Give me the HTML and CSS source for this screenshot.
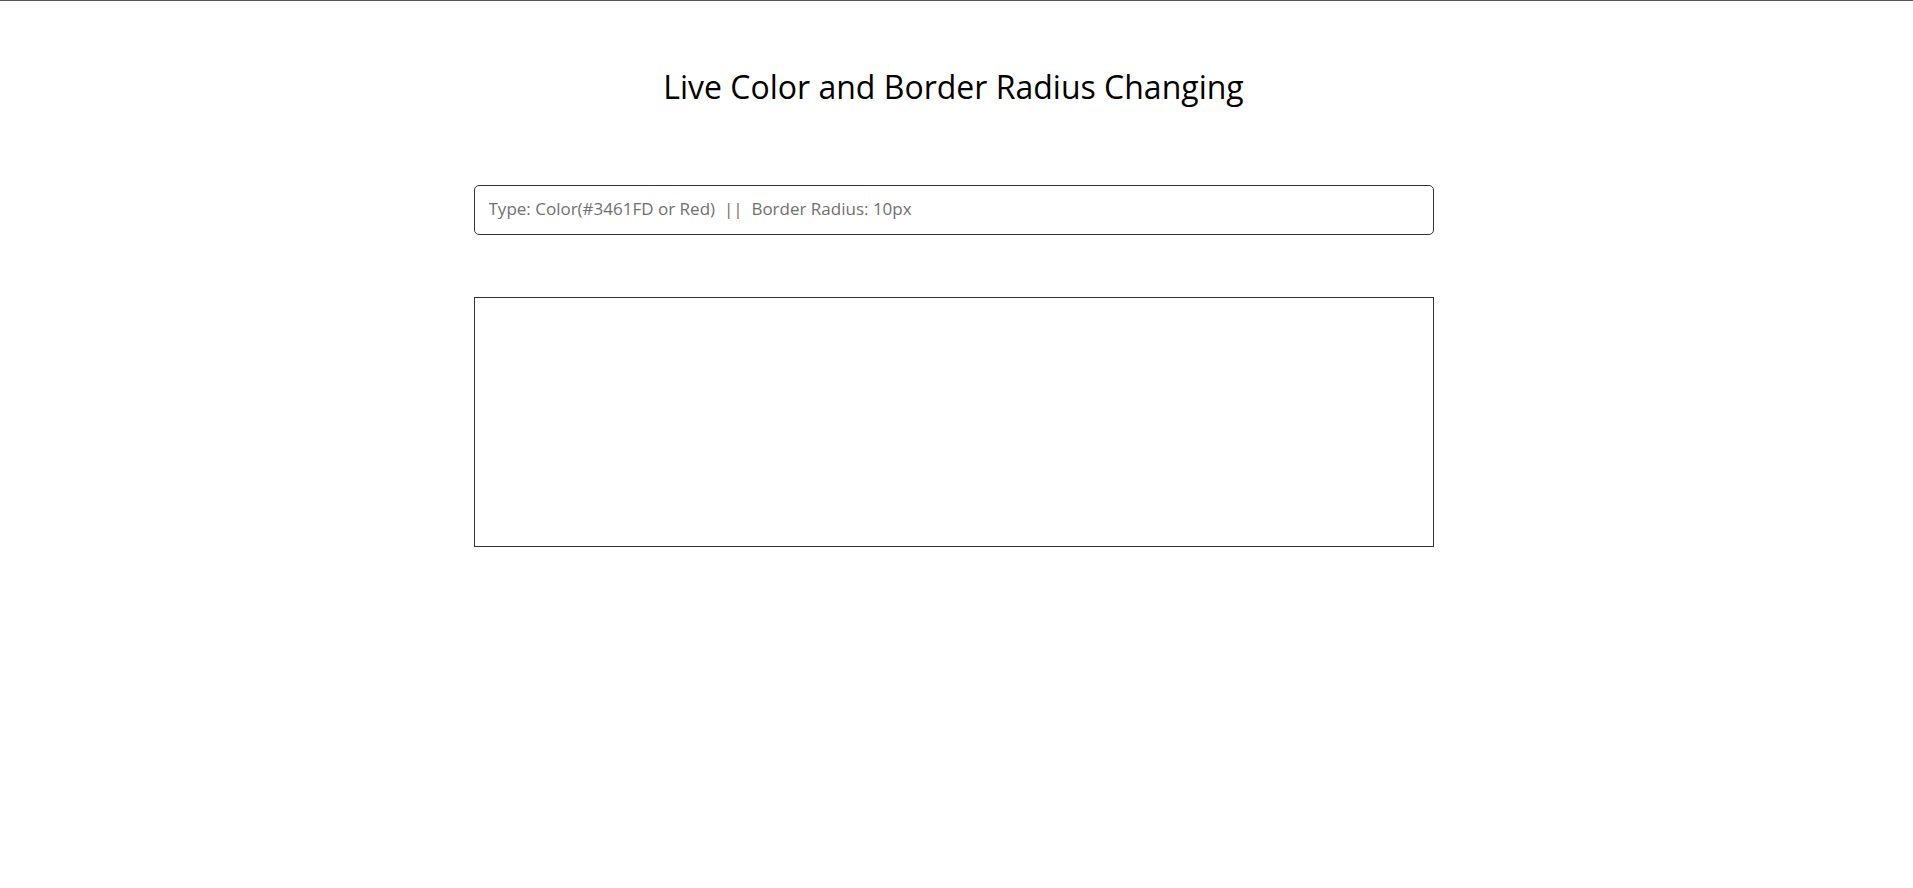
FILE: index.html
```html
<!DOCTYPE html>
<html lang="en">
<head>
<meta charset="UTF-8">
<title>Live Color and Border Radius Changing</title>
<link rel="stylesheet" href="styles.css">
</head>
<body>
  <main class="wrapper">
    <h1 class="title">Live Color and Border Radius Changing</h1>
    <input class="field" type="text" placeholder="Type: Color(#3461FD or Red)  ||  Border Radius: 10px">
    <div class="preview"></div>
  </main>
</body>
</html>
```

FILE: styles.css
```css
* { box-sizing: border-box; }
html, body { margin: 0; padding: 0; background: #fff; }
body {
  border-top: 1px solid #555;
  font-family: "Open Sans", "Liberation Sans", sans-serif;
}
.wrapper {
  width: 960px;
  margin-left: calc(50% - 483px);
  display: flex;
  flex-direction: column;
}
.title {
  margin: 66px -200px 0;
  text-align: center;
  font-size: 32px;
  font-weight: 500;
  line-height: 40px;
  color: #000;
}
.field {
  margin-top: 78px;
  width: 960px;
  height: 50px;
  border: 1px solid #333;
  border-radius: 5px;
  padding: 0 14px 3px;
  font-family: inherit;
  font-size: 17px;
  color: #333;
  outline: none;
}
.field::placeholder { color: #707070; }
.preview {
  margin-top: 62px;
  width: 960px;
  height: 250px;
  border: 1px solid #333;
}
```
